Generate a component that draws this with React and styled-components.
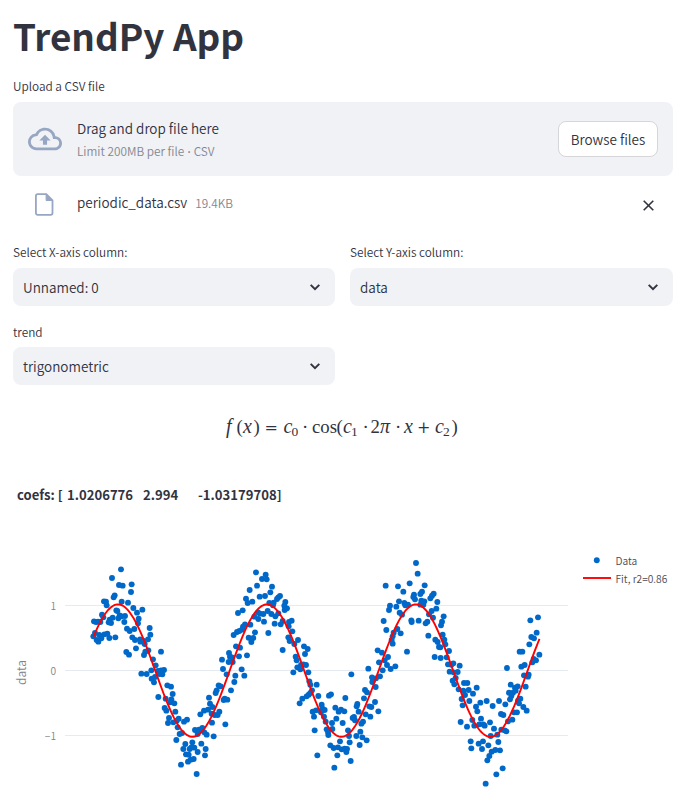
import React from 'react';
import styled, { createGlobalStyle } from 'styled-components';

const Global = createGlobalStyle`
  * { box-sizing: border-box; }
  body { margin: 0; background: #fff; color: #31333f; overflow: hidden; font-weight: 350;
    font-family: "Noto Sans CJK SC", "Noto Sans", sans-serif; }
`;

const Page = styled.main`
  width: 687px;
  height: 792px;
  padding: 0 14px 0 13px;
  overflow: hidden;
`;
const Title = styled.h1`
  margin: 0;
  height: 76px;
  line-height: 70px;
  font-size: 36.9px;
  font-weight: 700;
  white-space: nowrap;
`;
const Label = styled.div`
  height: ${(p) => p.$h}px;
  line-height: 20px;
  font-size: 11.8px;
  white-space: nowrap;
`;
const Dropzone = styled.section`
  display: flex;
  align-items: center;
  height: 74px;
  padding: 0 15px;
  border-radius: 8px;
  background: #f0f2f6;
`;
const CloudSlot = styled.div`
  display: flex;
  width: 49px;
`;
const DropText = styled.div`
  flex: 1;
  display: flex;
  flex-direction: column;
  gap: 1px;
`;
const Main = styled.span`
  font-size: 13.5px;
  line-height: 22px;
`;
const Small = styled.span`
  font-size: 11.8px;
  line-height: 22px;
  color: #85878f;
`;
const Bullet = styled.span`
  font-family: "Open Sans", sans-serif;
  font-size: 11px;
  line-height: 1;
`;
const Browse = styled.button`
  width: 100px;
  height: 36px;
  padding: 0 0 1px;
  border: 1px solid #d6d6d9;
  border-radius: 8px;
  background: #fff;
  color: #31333f;
  font-family: inherit;
  font-weight: inherit;
  font-size: 13.5px;
`;
const FileRow = styled.div`
  display: flex;
  align-items: center;
  height: 56px;
  padding: 0 18px 0 22px;
`;
const FileSlot = styled.div`
  display: flex;
  width: 42px;
`;
const FileText = styled.div`
  flex: 1;
  display: flex;
  align-items: baseline;
  gap: 8px;
  padding-bottom: 3px;
`;
const Columns = styled.div`
  display: grid;
  grid-template-columns: 322px 323px;
  column-gap: 15px;
  padding-top: 10px;
`;
const Select = styled.div`
  display: flex;
  align-items: center;
  justify-content: space-between;
  height: 38px;
  padding: 0 13px 0 10px;
  border-radius: 8px;
  background: #f0f2f6;
  font-size: 13.5px;
`;
const Trend = styled.div`
  width: 322px;
  padding-top: 16px;
`;
const Formula = styled.div`
  display: flex;
  align-items: baseline;
  height: 40px;
  margin-top: 21px;
  padding-left: 213px;
  line-height: 40px;
  font-family: "Liberation Serif", serif;
  font-size: 18.8px;
  font-weight: 400;
  white-space: pre;
`;
const Token = styled.span`
  flex: none;
  width: ${(p) => p.$w}px;
`;
const Variable = styled(Token)`
  font-style: italic;
  font-size: 20px;
`;
const Operator = styled(Token)`
  font-family: "DejaVu Serif", serif;
  font-size: 16px;
  font-weight: 400;
`;
const Subscript = styled(Token)`
  font-size: 13.5px;
  transform: translateY(3px);
`;
const Coefs = styled.div`
  display: flex;
  height: 24px;
  margin-top: 37px;
  padding-left: 4px;
  line-height: 24px;
  font-size: 13.1px;
  font-weight: 700;
  white-space: nowrap;
`;
const Coef = styled.span`
  width: ${(p) => p.$w}px;
`;
const Chart = styled.svg`
  display: block;
  width: 687px;
  height: 285px;
  margin-left: -13px;
`;
const AxisText = styled.text`
  fill: #7f828c;
  font-size: ${(p) => p.$size || 10.2}px;
`;
const LegendText = styled.text`
  fill: #4a4c57;
  font-size: 10.2px;
`;

const Chevron = () => (
  <svg width="14" height="14" viewBox="0 0 14 14" fill="none" stroke="#31333f" strokeWidth="2">
    <path d="M2.7 4.9 7 9.1l4.3-4.2" />
  </svg>
);

const Field = ({ label, value, h = 26 }) => (
  <div>
    <Label $h={h}>{label}</Label>
    <Select><span>{value}</span><Chevron /></Select>
  </div>
);

// Sample positions in thirds of a pixel, grouped by the x origin of each stretch.
const SAMPLES = [
  [80, `123,58 96,84 117,105 128,107 155,103 153,126 104,136 101,142 72,154 78,155 80,166 125,155 144,158 160,174 187,179 171,188 66,194 70,202 109,181 112,183 42,214 48,216 54,215 61,216 89,209 86,217 93,219 98,203 115,205 119,196 125,199 135,198 133,216 176,206 174,220 209,234 211,254 141,236 149,243 163,237 204,268 157,262 165,270 40,259 45,249 50,270 55,275 58,255 64,265 73,253 82,251 88,264 106,262 180,268 181,275 189,272 194,282 168,295 139,306 147,314 205,301 196,305 192,315 243,305 219,328 227,346 214,361 184,371 200,372 215,386 222,397 225,381 234,363 238,372 243,361 247,373 252,360 262,406 273,410 278,432 235,441 257,446 274,448 271,457 283,460 254,474 259,482 286,485 267,504 264,519 296,506 290,512 280,517 312,515 321,509 293,532 299,552 306,549 289,570 345,540 353,552 357,539 316,582 337,577 310,597 329,597 334,592 343,593 353,606 318,613 326,614 341,627 332,629 324,635 303,644 350,672`],
  [200, `168,67 197,74 186,87 200,88 171,107 216,110 149,120 211,127 179,140 195,138 138,146 143,159 157,155 240,138 235,142 231,147 256,156 208,159 221,158 219,166 253,167 261,175 254,180 114,189 128,181 174,187 180,191 190,192 203,183 214,192 226,199 235,190 175,207 192,215 163,200 224,221 242,223 248,213 275,212 267,216 266,229 277,244 151,224 135,223 129,230 126,239 118,243 111,246 101,255 165,247 205,249 146,263 154,268 160,264 154,276 265,262 269,273 294,270 283,282 108,289 120,293 248,300 312,289 323,297 315,312 87,309 90,320 96,322 117,319 141,316 66,329 86,336 98,336 69,357 125,358 80,373 106,377 133,377 103,396 287,320 290,331 280,367 292,352 301,358 303,345 310,343 318,345 325,367 328,394 331,404 350,404 56,406 62,409 50,421 47,429 93,421 27,443 30,461 74,446 71,450 82,449 37,471 58,485 44,495 53,495 35,491 24,479 12,482 1,493 36,518 76,523 7,534 13,547 20,554 41,559 4,581 17,597 15,616 336,421 331,429 326,434 320,439 307,446 299,460 355,438 338,485 348,481 342,500 344,541 352,616`],
  [320, `288,39 293,71 269,100 197,107 234,109 314,106 250,125 306,125 301,132 341,131 336,137 331,145 282,134 280,141 285,148 304,152 313,154 301,164 310,164 237,154 253,159 256,166 264,164 229,170 210,167 207,180 239,188 246,194 352,156 349,176 335,183 327,193 339,203 274,211 275,216 296,212 322,215 317,220 191,213 199,240 232,237 221,248 242,250 218,259 215,270 218,281 325,257 346,269 353,276 357,291 344,321 261,305 173,301 186,308 204,321 177,337 194,331 201,345 226,349 212,357 145,356 188,361 180,379 156,382 159,391 168,385 157,396 167,411 94,373 135,420 141,427 132,445 33,433 27,437 76,444 5,464 7,475 14,480 46,473 56,485 63,479 73,484 112,462 110,469 116,485 154,471 148,469 165,456 175,484 137,493 151,500 3,487 12,500 17,515 36,519 49,506 68,519 98,504 102,501 105,511 129,515 124,521 20,538 24,546 25,555 37,537 84,541 121,545 109,558 127,562 140,571 87,558 60,574 89,577 31,586 119,585 41,594 54,592 65,598 74,596 81,597 79,606 52,616 92,633 43,653`],
  [440, `11,199 6,215 3,226 8,254 13,269 16,283 1,292 27,303 2,324 20,322 24,343 34,344 40,340 59,347 29,365 41,367 53,366 47,384 38,392 43,403 72,399 82,399 56,418 70,422 86,420 110,413 99,431 75,435 65,447 68,466 88,453 108,470 112,484 121,458 140,453 158,468 177,453 196,463 201,354 62,516 81,530 97,510 103,527 123,506 118,523 130,523 134,527 150,517 162,536 152,558 172,554 183,492 190,495 184,539 194,541 199,544 204,514 217,509 212,404 207,428 219,428 214,438 210,448 225,413 233,409 227,422 234,452 241,446 237,460 222,487 231,487 250,471 260,482 257,410 252,376 264,380 266,374 244,350 254,345 239,305 247,305 268,283 274,261 282,265 290,248 271,211 294,202 277,337 281,327 288,331 298,314 92,574 94,595 129,574 116,581 126,597 145,586 175,576 155,605 166,600 180,601 148,618 142,631 188,655 169,673 137,701`],
];
const dots = SAMPLES.flatMap(([origin, list]) =>
  list.split(' ').map((pair) => {
    const [x, y] = pair.split(',').map(Number);
    return [origin + x / 3, 550 + y / 3];
  })
);
const fit = Array.from({ length: 301 }, (_, i) => {
  const t = i / 300;
  const y = 670.6 - 66.2 * Math.cos(2 * Math.PI * 2.994 * t - 1.03179708);
  return `${(93.5 + 446 * t).toFixed(2)},${y.toFixed(2)}`;
}).join(' ');

const TrendChart = () => (
  <Chart viewBox="0 507 687 285">
    {[605.5, 670.5, 735.5].map((y) => (
      <line key={y} x1="65" x2="568" y1={y} y2={y} stroke="#e6eaf1" />
    ))}
    <g fill="#0068c9">
      {dots.map(([x, y], i) => <circle key={i} cx={x} cy={y} r="2.95" />)}
      <circle cx="596.8" cy="560.3" r="2.95" />
    </g>
    <polyline points={fit} fill="none" stroke="#f00" strokeWidth="1.9" />
    <line x1="583" x2="611" y1="578" y2="578" stroke="#f00" strokeWidth="1.9" />
    <AxisText x="56" y="610" textAnchor="end">1</AxisText>
    <AxisText x="56" y="675" textAnchor="end">0</AxisText>
    <AxisText x="56" y="739.5" textAnchor="end">−1</AxisText>
    <AxisText $size={12} transform="translate(26 672.5) rotate(-90)" textAnchor="middle">data</AxisText>
    <LegendText x="615.5" y="565">Data</LegendText>
    <LegendText x="615.5" y="583">Fit, r2=0.86</LegendText>
  </Chart>
);

const FORMULA = [
  [Variable, 'f', 10.5], [Token, '(', 6.5], [Variable, 'x', 10.5], [Token, ')', 11],
  [Operator, '=', 19], [Variable, 'c', 8], [Subscript, '0', 10.5], [Token, '·', 10],
  [Token, 'cos', 24.5], [Token, '(', 6.5], [Variable, 'c', 8], [Subscript, '1', 11.5],
  [Token, '·', 8], [Token, '2', 9.5], [Variable, 'π', 15], [Token, '·', 9],
  [Variable, 'x', 13], [Operator, '+', 18], [Variable, 'c', 8], [Subscript, '2', 8.5],
  [Token, ')', 6],
];

export default function App() {
  return (
    <Page>
      <Global />
      <Title>TrendPy App</Title>
      <Label $h={26}>Upload a CSV file</Label>
      <Dropzone>
        <CloudSlot>
          <svg width="34" height="34" viewBox="0 0 24 24" fill="#97a6c3">
            <path d="M19.35 10.04A7.49 7.49 0 0 0 12 4C9.11 4 6.6 5.64 5.35 8.04A5.994 5.994 0 0 0 0 14c0 3.31 2.69 6 6 6h13c2.76 0 5-2.24 5-5 0-2.64-2.05-4.78-4.65-4.96zM19 18H6c-2.21 0-4-1.79-4-4 0-2.05 1.53-3.76 3.56-3.97l1.07-.11.5-.95A5.469 5.469 0 0 1 12 6c2.62 0 4.88 1.86 5.39 4.43l.3 1.5 1.53.11A2.98 2.98 0 0 1 22 15c0 1.65-1.35 3-3 3zM8 13h2.55v3h2.9v-3H16l-4-4z" />
          </svg>
        </CloudSlot>
        <DropText>
          <Main>Drag and drop file here</Main>
          <Small>Limit 200MB per file <Bullet>•</Bullet> CSV</Small>
        </DropText>
        <Browse>Browse files</Browse>
      </Dropzone>
      <FileRow>
        <FileSlot>
          <svg width="19" height="23" viewBox="0 0 19 23" fill="none" stroke="#97a6c3" strokeWidth="1.8">
            <path d="M2.7 1.1h8.6l6.2 6.2v12.8a1.8 1.8 0 0 1-1.8 1.8H2.7A1.8 1.8 0 0 1 .9 20.1V2.9a1.8 1.8 0 0 1 1.8-1.8z" />
            <path d="M11.1 1.2v6.3h6.3z" fill="#97a6c3" strokeWidth="1" />
          </svg>
        </FileSlot>
        <FileText><Main>periodic_data.csv</Main><Small>19.4KB</Small></FileText>
        <svg width="13" height="13" viewBox="0 0 13 13" stroke="#31333f" strokeWidth="1.6">
          <path d="M1.7 2.7l9.6 9.6M11.3 2.7l-9.6 9.6" />
        </svg>
      </FileRow>
      <Columns>
        <Field label="Select X-axis column:" value="Unnamed: 0" />
        <Field label="Select Y-axis column:" value="data" />
      </Columns>
      <Trend><Field label="trend" value="trigonometric" h={25} /></Trend>
      <Formula>
        {FORMULA.map(([Part, text, w], i) => (
          <Part key={i} $w={w}>{text}</Part>
        ))}
      </Formula>
      <Coefs>
        <Coef $w={50}>coefs: [</Coef>
        <Coef $w={76}>1.0206776</Coef>
        <Coef $w={55}>2.994</Coef>
        <Coef $w={90}>-1.03179708]</Coef>
      </Coefs>
      <TrendChart />
    </Page>
  );
}
